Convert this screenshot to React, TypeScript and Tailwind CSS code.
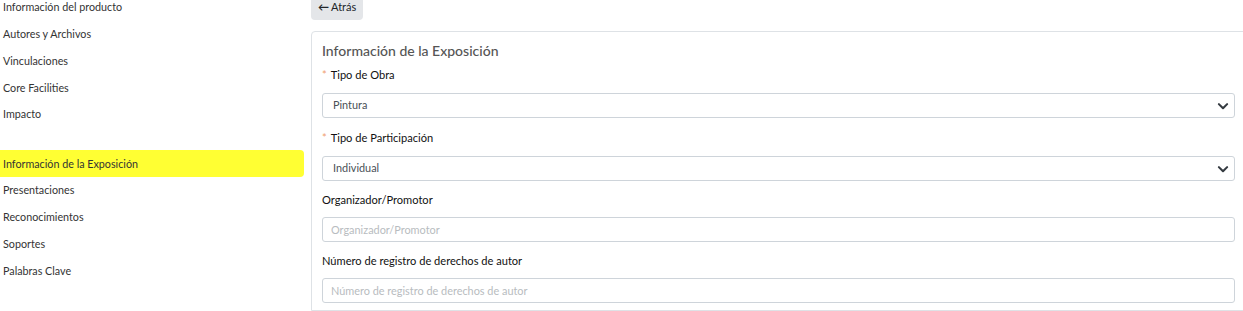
const topItems = [
  "Información del producto",
  "Autores y Archivos",
  "Vinculaciones",
  "Core Facilities",
  "Impacto",
];

const bottomItems = [
  "Información de la Exposición",
  "Presentaciones",
  "Reconocimientos",
  "Soportes",
  "Palabras Clave",
];

function NavItem({ label, active }: { label: string; active?: boolean }) {
  return (
    <div
      className={
        "h-[26.75px] flex items-center pl-[3px] text-[10.75px] text-[#333] rounded-r-[4px] " +
        (active ? "bg-[#ffff33]" : "")
      }
    >
      {label}
    </div>
  );
}

function Chevron() {
  return (
    <svg width="12" height="12" viewBox="0 0 16 16" className="text-[#343a40]">
      <path
        d="M2.5 5.5 8 11l5.5-5.5"
        fill="none"
        stroke="currentColor"
        strokeWidth="2.8"
        strokeLinecap="round"
        strokeLinejoin="round"
      />
    </svg>
  );
}

function Label({ text, required }: { text: string; required?: boolean }) {
  return (
    <div className="h-[17px] pb-[1px] flex items-center text-[11.1px] text-[#111] font-normal">
      {required && <span className="text-[#f0a070] mr-[4px]">*</span>}
      {text}
    </div>
  );
}

function SelectBox({ value }: { value: string }) {
  return (
    <div className="h-[25px] border border-[#ced4da] rounded-[3px] bg-white flex items-center justify-between pl-[10px] pr-[5px] text-[10.9px] text-[#495057]">
      <span>{value}</span>
      <Chevron />
    </div>
  );
}

function TextBox({ placeholder }: { placeholder: string }) {
  return (
    <input
      placeholder={placeholder}
      className="h-[25px] w-full border border-[#ced4da] rounded-[3px] bg-white px-[8px] text-[10.9px] text-[#495057] placeholder:text-[#b8bcc0] outline-none"
    />
  );
}

export default function App() {
  return (
    <div
      className="w-[1243px] h-[311px] overflow-hidden bg-white flex"
      style={{ fontFamily: 'Lato, "Open Sans", sans-serif' }}
    >
      <div className="w-[304px] shrink-0 -mt-[6px]">
        {topItems.map((t) => (
          <NavItem key={t} label={t} />
        ))}
        <div className="h-[22.6px]" />
        {bottomItems.map((t, i) => (
          <NavItem key={t} label={t} active={i === 0} />
        ))}
      </div>
      <div className="ml-[7px] flex-1 flex flex-col">
        <div className="self-start h-[20px] px-[7px] pb-[6px] bg-[#e4e6e9] rounded-b-[4px] flex items-center text-[11px] text-[#212529]">
          <span className="font-bold mr-[2px]">←</span>Atrás
        </div>
        <div className="mt-[11px] -mr-[10px] border border-[#dee2e6] rounded-tl-[4px] pl-[10px] pr-[17px] pt-[8px] flex-1">
          <div className="text-[14px] text-[#555] font-medium h-[20px] flex items-center">
            Información de la Exposición
          </div>
          <div className="mt-[7px]">
            <Label text="Tipo de Obra" required />
            <div className="mt-[9px]">
              <SelectBox value="Pintura" />
            </div>
          </div>
          <div className="mt-[12px]">
            <Label text="Tipo de Participación" required />
            <div className="mt-[9px]">
              <SelectBox value="Individual" />
            </div>
          </div>
          <div className="mt-[11px]">
            <Label text="Organizador/Promotor" />
            <div className="mt-[7px]">
              <TextBox placeholder="Organizador/Promotor" />
            </div>
          </div>
          <div className="mt-[11px]">
            <Label text="Número de registro de derechos de autor" />
            <div className="mt-[7px]">
              <TextBox placeholder="Número de registro de derechos de autor" />
            </div>
          </div>
        </div>
      </div>
    </div>
  );
}
